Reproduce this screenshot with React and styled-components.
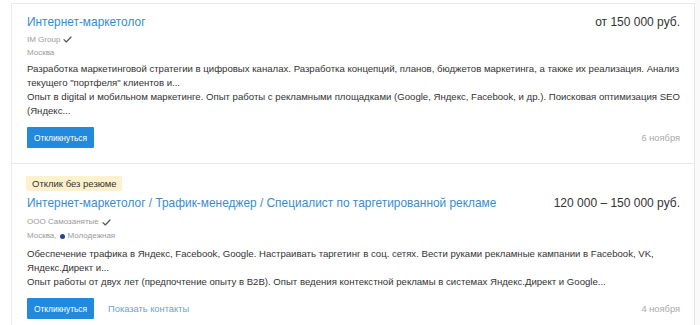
import styled, { createGlobalStyle } from "styled-components";

const GlobalStyle = createGlobalStyle`
  html, body {
    margin: 0;
    padding: 0;
    background: #ffffff;
  }
  body {
    font-family: "Liberation Sans", Arial, sans-serif;
    color: #333333;
  }
`;

const vacancies = [
  {
    id: 1,
    title: "Интернет-маркетолог",
    salary: "от 150 000 руб.",
    company: "IM Group",
    city: "Москва",
    metro: null,
    lines: [
      "Разработка маркетинговой стратегии в цифровых каналах. Разработка концепций, планов, бюджетов маркетинга, а также их реализация. Анализ",
      "текущего \"портфеля\" клиентов и...",
      "Опыт в digital и мобильном маркетинге. Опыт работы с рекламными площадками (Google, Яндекс, Facebook, и др.). Поисковая оптимизация SEO",
      "(Яндекс...",
    ],
    date: "6 ноября",
    noResume: false,
    contacts: false,
  },
  {
    id: 2,
    title:
      "Интернет-маркетолог / Трафик-менеджер / Специалист по таргетированной рекламе",
    salary: "120 000 – 150 000 руб.",
    company: "ООО Самозанятые",
    city: "Москва,",
    metro: "Молодежная",
    lines: [
      "Обеспечение трафика в Яндекс, Facebook, Google. Настраивать таргетинг в соц. сетях. Вести руками рекламные кампании в Facebook, VK,",
      "Яндекс.Директ и...",
      "Опыт работы от двух лет (предпочтение опыту в B2B). Опыт ведения контекстной рекламы в системах Яндекс.Директ и Google...",
    ],
    date: "4 ноября",
    noResume: true,
    contacts: true,
  },
];

const Check = () => (
  <CheckIcon viewBox="0 0 10 8" width="9" height="7">
    <polyline points="1,4.2 3.6,6.8 9,1.2" />
  </CheckIcon>
);

const App = () => {
  return (
    <>
      <GlobalStyle />
      <Page>
        <List>
          {vacancies.map((v) => (
            <Card key={v.id} $roomy={v.noResume}>
              {v.noResume && <Badge>Отклик без резюме</Badge>}
              <Header>
                <Title href="#">{v.title}</Title>
                <Salary>{v.salary}</Salary>
              </Header>
              <MetaBlock>
                <Meta>
                  {v.company} <Check />
                </Meta>
                <Meta>
                  {v.city}
                  {v.metro && (
                    <>
                      {" "}
                      <MetroDot />
                      {v.metro}
                    </>
                  )}
                </Meta>
              </MetaBlock>
              <Description>
                {v.lines.map((l, i) => (
                  <span key={i}>{l}</span>
                ))}
              </Description>
              <Footer>
                <Actions>
                  <RespondButton>Откликнуться</RespondButton>
                  {v.contacts && <ContactsLink>Показать контакты</ContactsLink>}
                </Actions>
                <DateLabel>{v.date}</DateLabel>
              </Footer>
            </Card>
          ))}
        </List>
        <Side />
      </Page>
    </>
  );
};

export default App;

const Page = styled.div`
  display: flex;
  padding-left: 11px;
  width: 700px;
  box-sizing: border-box;
`;

const List = styled.div`
  width: 682px;
  border-left: 1px solid #ececec;
  border-right: 1px solid #e6e6e6;
  margin-top: 3px;
  border-top: 1px solid #e8e8e8;
`;

const Side = styled.div`
  flex: 1;
  background: #fafafa;
`;

const Card = styled.div`
  --meta-lh: ${(p) => (p.$roomy ? "14px" : "13px")};
  --meta-gap: ${(p) => (p.$roomy ? "3px" : "2px")};
  --desc-gap: ${(p) => (p.$roomy ? "4px" : "3px")};
  padding: 9px 14px 15px 15px;
  border-bottom: 1px solid #e8e8e8;
  &:last-child {
    border-bottom: none;
  }
`;

const Badge = styled.div`
  width: fit-content;
  background: #fdf2cd;
  color: #333;
  font-size: 9.5px;
  line-height: 15px;
  padding: 0 5px 0 6px;
  margin: 3px 0 3px -1px;
`;

const Header = styled.div`
  display: flex;
  justify-content: space-between;
  align-items: center;
  gap: 20px;
`;

const Title = styled.a`
  color: #3a8bcd;
  font-size: 11.9px;
  line-height: 18px;
  text-decoration: none;
`;

const Salary = styled.div`
  color: #333;
  font-size: 12px;
  line-height: 18px;
  white-space: nowrap;
`;

const MetaBlock = styled.div`
  margin-top: var(--meta-gap);
`;

const Meta = styled.div`
  display: flex;
  align-items: center;
  gap: 3px;
  color: #9a9a9a;
  font-size: 8px;
  line-height: var(--meta-lh);
`;

const CheckIcon = styled.svg`
  fill: none;
  stroke: #555;
  stroke-width: 1.4;
  stroke-linecap: round;
  stroke-linejoin: round;
`;

const MetroDot = styled.span`
  display: inline-block;
  width: 5px;
  height: 5px;
  border-radius: 50%;
  background: #23468f;
`;

const Description = styled.div`
  margin-top: var(--desc-gap);
  font-size: 9.6px;
  line-height: 14px;
  color: #333;
  white-space: nowrap;
  span {
    display: block;
  }
`;

const Footer = styled.div`
  display: flex;
  justify-content: space-between;
  align-items: center;
  margin-top: 9px;
`;

const Actions = styled.div`
  display: flex;
  align-items: center;
  gap: 14px;
`;

const RespondButton = styled.button`
  background: #2189de;
  color: #fff;
  border: none;
  border-radius: 1px;
  font-family: "Liberation Sans", Arial, sans-serif;
  font-size: 8.4px;
  height: 21px;
  padding: 0 7px;
  cursor: pointer;
`;

const ContactsLink = styled.a`
  color: #66a3d6;
  font-size: 9.3px;
  cursor: pointer;
`;

const DateLabel = styled.div`
  color: #aaa;
  font-size: 9.3px;
`;
